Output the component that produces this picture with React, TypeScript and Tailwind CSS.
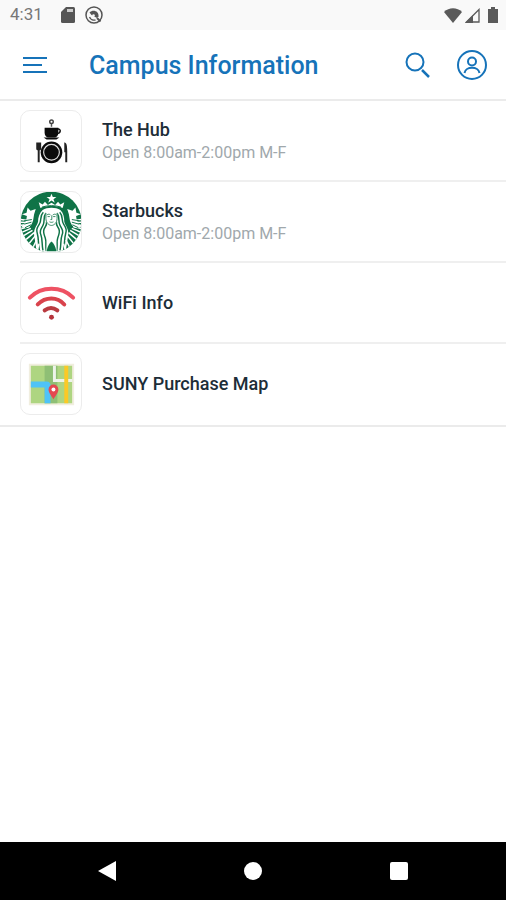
import React from "react";

const HubIcon = () => (
  <svg viewBox="0 0 61 61" className="size-full" fill="#0b0b0b">
    <path d="M31 16v-3" stroke="#555" strokeWidth="1.500" />
    <circle cx="31" cy="11" r="1.800" fill="none" stroke="#444" strokeWidth="1.500" />
    <path d="M24 17h14v5c0 3-2 5-4 5h-6c-2 0-4-2-4-5z" />
    <path d="M37 18.500c4-1 4 4.500-1 4.500" fill="none" stroke="#0b0b0b" strokeWidth="1.500" />
    <path d="M23 27h16l-3 2H26z" />
    <circle cx="31" cy="42" r="11" />
    <circle cx="31" cy="42" r="8" fill="none" stroke="#ddd" strokeWidth="1.200" />
    <path d="M15.500 32v6c0 1.500 1 2 1.500 2v12h2V40c.5 0 1.500-.5 1.500-2v-6z" fill="#222" />
    <path d="M44 32c2 0 3 2 3 9v11h-2v-10h-1z" fill="#222" />
  </svg>
);

const SirenIcon = () => (
  <svg viewBox="0 0 183 183" className="size-full" fill="none">
    <defs>
      <clipPath id="disc">
        <circle cx="92" cy="92" r="93" />
      </clipPath>
    </defs>
    <g clipPath="url(#disc)">
      <path d="M0 0h183v183H0z" fill="#0f7347" />
      {/* crown */}
      <path
        d="M93 5l4 10h11l-9 7 4 11-10-7-10 7 4-11-9-7h11z M54 31l12 7 7-8 9 10 11-7 11 7 9-10 7 8 12-7-5 18c-20-8-48-8-68 0z"
        fill="#fff"
      />
      <path d="M64 46c18-6 40-6 58 0" stroke="#0f7347" strokeWidth="3" />
      {/* hair */}
      <path
        d="M66 55c14-9 40-9 54 0 10 10 12 22 12 36 4 14 14 22 12 40l-8 52H48l-8-52c-2-18 8-26 12-40 0-14 4-26 14-36z"
        fill="#fff"
      />
      <path
        d="M68 62c-12 12-4 24-12 36s-10 18-6 30 2 28 6 50M76 64c-10 14-2 26-9 38s-11 18-6 30 2 28 6 46M78 90c2 12-5 16-8 24s0 16 4 26 0 24 3 40M118 62c12 12 4 24 12 36s10 18 6 30-2 28-6 50M110 64c10 14 2 26 9 38s11 18 6 30-2 28-6 46M108 90c-2 12 5 16 8 24s0 16-4 26 0 24-3 40"
        stroke="#0f7347"
        strokeWidth="4.500"
      />
      {/* face */}
      <path d="M75 62c10-8 26-8 36 0v20c0 12-10 20-18 20s-18-8-18-20z" fill="#fff" />
      <path
        d="M76 64v17c0 12 9 21 17 21s17-9 17-21V64M79 70c4-3 8-3 11 0M97 70c4-3 8-3 11 0M94 71v13h-4M87 91c4 2 8 2 12 0M81 75h7M98 75h7"
        stroke="#0f7347"
        strokeWidth="2.500"
      />
      <path d="M84 103l9 5 9-5 3 13c7 7 5 16 1 24l3 43H77l3-43c-4-8-6-17 1-24z" fill="#fff" />
      <path d="M78 181c4-18 8-24 15-30 7 6 11 12 15 30z" fill="#0f7347" />
      {/* twin tails */}
      <path
        d="M20 47l9 10 16-5-5 16-3 18c-2 10-8 18-16 24l-20-3c11-10 16-20 17-34l-15-5 14-5zM166 47l-9 10-16-5 5 16 3 18c2 10 8 18 16 24l20-3c-11-10-16-20-17-34l15-5-14-5z"
        fill="#fff"
      />
      <path
        d="M-4 83l24 4M-4 92l25 1M-3 102l26-3M-1 112l27-7M2 123l28-12M7 134l28-17M14 146l26-22M24 158l20-25M36 170l12-24M49 180l6-22M189 83l-24 4M189 92l-25 1M188 102l-26-3M186 112l-27-7M183 123l-28-12M178 134l-28-17M171 146l-26-22M161 158l-20-25M149 170l-12-24M136 180l-6-22"
        stroke="#fff"
        strokeWidth="4.500"
      />
      <path
        d="M9 88l24-4M10 98l22-6M12 109l18-9M155 84l24 4M155 92l22 6M157 100l18 9"
        stroke="#0f7347"
        strokeWidth="3"
      />
    </g>
  </svg>
);

const WifiIcon = () => (
  <svg viewBox="0 0 61 61" className="size-full" fill="none" strokeLinecap="round">
    <path d="M9 25c12-12 32-12 44 0" stroke="#ee5263" strokeWidth="4" />
    <path d="M17 32c8-8 20-8 27 0" stroke="#d9434c" strokeWidth="4" />
    <path d="M24 38c4-3 9-3 13 0" stroke="#b93a40" strokeWidth="4" />
    <circle cx="31" cy="45" r="2.500" fill="#b5333b" />
  </svg>
);

const MapIcon = () => (
  <svg viewBox="0 0 61 61" className="size-full" fill="none">
    <path d="M8 10h46v42H8z" fill="#f1eedf" />
    <path d="M10 12h42v38H10z" fill="#aed581" />
    <path d="M24 12l13 0v38H24z" fill="#8fbf75" />
    <path d="M10 28h16c3 0 4 2 4 4v18h-6V34H10z" fill="#4fc3f7" />
    <path d="M34 12v15h18" stroke="#eef3ea" strokeWidth="3" />
    <path d="M46 12v38" stroke="#fbc926" strokeWidth="4" />
    <path d="M33 46c-3-5-5-7-5-10a5 5 0 0 1 10 0c0 3-2 5-5 10z" fill="#e54850" />
    <circle cx="33" cy="36" r="2" fill="#fff" />
  </svg>
);

const places = [
  { name: "The Hub", hours: "Open 8:00am-2:00pm M-F", icon: <HubIcon /> },
  { name: "Starbucks", hours: "Open 8:00am-2:00pm M-F", icon: <SirenIcon /> },
  { name: "WiFi Info", hours: "", icon: <WifiIcon /> },
  { name: "SUNY Purchase Map", hours: "", icon: <MapIcon /> },
];

const StatusBar = () => (
  <div className="flex h-[30px] items-center justify-between bg-[#f9f9f9] pl-[10px] pr-2">
    <div className="flex items-center">
      <span className="text-[17px] text-[#777]">4:31</span>
      <svg viewBox="0 0 14 16" className="ml-[18px] h-4 w-[14px]">
        <path d="M5 0h7.500q1.500 0 1.500 1.500v13q0 1.500-1.500 1.500h-11Q0 16 0 14.500V5z" fill="#555" />
        <path d="M6 2h6v3H6z" fill="#ccc" />
      </svg>
      <svg viewBox="0 0 18 18" className="ml-[10px] size-[18px]" fill="none" stroke="#555">
        <circle cx="9" cy="9" r="8" strokeWidth="1.500" />
        <path d="M4.500 11a5 5 0 0 0 6 3" strokeWidth="1.300" />
        <path d="M4.500 6.500C8 3 14 5 13.500 10.500L12 12 6.500 9z" fill="#555" stroke="none" />
        <circle cx="8.500" cy="9.500" r="1.300" fill="#f9f9f9" stroke="none" />
        <path d="M12 12l3.500 3.500" strokeWidth="2" />
      </svg>
    </div>
    <div className="flex items-center">
      <svg viewBox="0 0 18 15" className="h-[15px] w-[18px]" fill="#5a5a5a">
        <path d="M0 4c5-5 13-5 18 0L9 15z" />
      </svg>
      <svg viewBox="0 0 15 15" className="ml-[3px] size-[15px]">
        <path d="M14 1.500V14H1.500z" fill="none" stroke="#5a5a5a" strokeWidth="1.300" />
        <path d="M8 7v8H0z" fill="#5a5a5a" />
      </svg>
      <svg viewBox="0 0 10 16" className="ml-2 h-4 w-[10px]" fill="#5a5a5a">
        <path d="M3 0h4v2h3v14H0V2h3z" />
      </svg>
    </div>
  </div>
);

const Header = () => (
  <header className="flex h-[71px] items-center border-b-2 border-[#ebebeb] pl-[23px] pr-[18px] text-[#1673b9]">
    <button type="button" aria-label="Menu">
      <svg viewBox="0 0 25 18" className="h-[18px] w-[25px]" stroke="currentColor" strokeWidth="2">
        <path d="M0 2h24M0 9h19M0 16h24" />
      </svg>
    </button>
    <h1 className="ml-[41px] flex-1 pt-[2px] text-[25px] font-medium">Campus Information</h1>
    <button type="button" aria-label="Search">
      <svg viewBox="0 0 26 26" className="size-[26px]" fill="none" stroke="currentColor">
        <circle cx="10" cy="10" r="8.500" strokeWidth="2" />
        <path d="M17 18l7 7" strokeWidth="2.500" />
      </svg>
    </button>
    <button type="button" aria-label="Profile" className="ml-[25px]">
      <svg viewBox="0 0 32 32" className="size-8" fill="none" stroke="currentColor" strokeWidth="2">
        <circle cx="16" cy="16" r="14" />
        <circle cx="16" cy="12.500" r="4" />
        <path d="M8.500 24c1-7 14-7 15 0" />
      </svg>
    </button>
  </header>
);

export default function App() {
  return (
    <div className="flex min-h-screen flex-col bg-white font-['Roboto',sans-serif]">
      <StatusBar />
      <Header />
      <main className="flex-1">
        <ul className="border-b-2 border-[#ebebeb]">
          {places.map((place, i) => (
            <li key={place.name} className="pl-5">
              <a
                href="#"
                className={`flex items-center gap-5 pt-[9px] ${
                  i < places.length - 1 ? "border-b-2 border-[#efefef] pb-2" : "pb-[10px]"
                }`}
              >
                <span className="size-[62px] shrink-0 overflow-hidden rounded-[10px] border border-[#ececec]">
                  {place.icon}
                </span>
                <span className="flex flex-col">
                  <span className="text-lg leading-6 font-medium text-[#1d2d38]">{place.name}</span>
                  {place.hours && (
                    <span className="text-base leading-[22px] text-[#a0a8ac]">{place.hours}</span>
                  )}
                </span>
              </a>
            </li>
          ))}
        </ul>
      </main>
      <nav className="flex h-[58px] items-center justify-center gap-32 bg-black">
        <button type="button" aria-label="Back">
          <svg viewBox="0 0 18 20" className="h-5 w-[18px]" fill="#fff">
            <path d="M18 0v20L0 10z" />
          </svg>
        </button>
        <button type="button" aria-label="Home" className="size-[18px] rounded-full bg-white" />
        <button type="button" aria-label="Recent apps" className="size-[18px] rounded-xs bg-white" />
      </nav>
    </div>
  );
}
